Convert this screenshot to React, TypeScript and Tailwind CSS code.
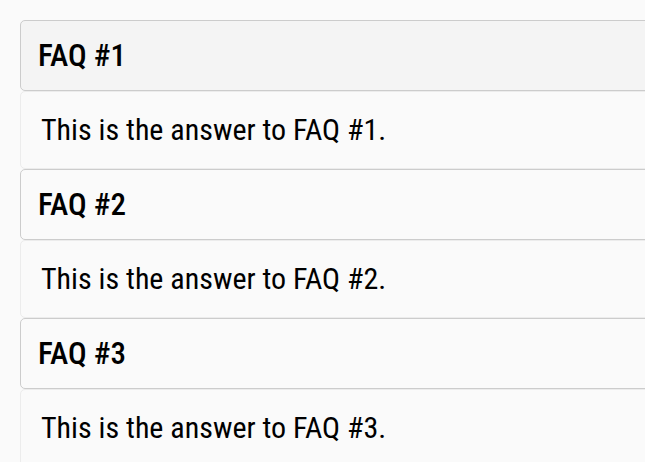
import React from "react";

const items = [1, 2, 3];

export default function App() {
  return (
    <div
      className="w-[645px] h-[462px] overflow-hidden bg-[#fafafa] pt-[20px] pl-[20px]"
      style={{ fontFamily: "Roboto, 'Liberation Sans', sans-serif" }}
    >
      <div className="w-[700px] flex flex-col">
        {items.map((n) => (
          <div key={n} className="flex flex-col">
            <div
              className={`h-[71px] flex items-center pl-[17px] border border-[#cccccc] rounded-[5px] ${
                n === 1 ? "bg-[#f4f4f4]" : "bg-[#fafafa]"
              }`}
            >
              <span className="text-[31px] font-medium text-black font-stretch-condensed leading-none">
                FAQ #{n}
              </span>
            </div>
            <div className="h-[78px] flex items-center pl-[20px] border border-[#ececec] rounded-[5px] bg-[#fafafa]">
              <span className="text-[30px] text-black font-stretch-condensed leading-none">
                This is the answer to FAQ #{n}.
              </span>
            </div>
          </div>
        ))}
      </div>
    </div>
  );
}
